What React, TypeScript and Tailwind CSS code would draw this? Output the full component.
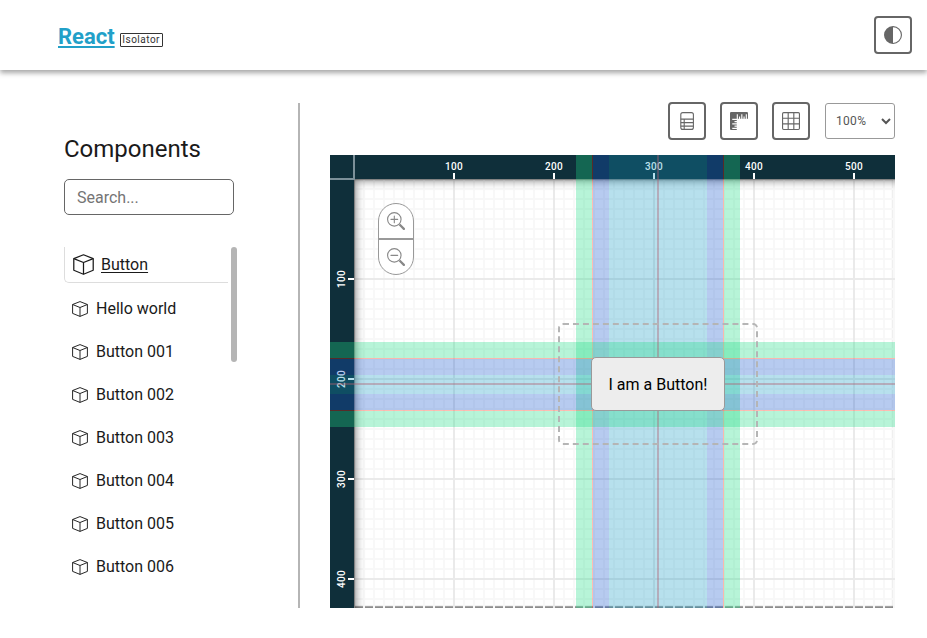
import React from "react";
import { BsCircleHalf, BsGrid3X3, BsRulers, BsZoomIn, BsZoomOut } from "react-icons/bs";

const items = ["Hello world", "Button 001", "Button 002", "Button 003", "Button 004", "Button 005", "Button 006"];

function Cube({ size }: { size: number }) {
  return (
    <svg width={size} height={size} viewBox="0 0 16 16" fill="none" stroke="#1a1a1a" strokeWidth="0.95" strokeLinejoin="round" className="shrink-0">
      <path d="M8 .6 15.4 3.5V12.4L8 15.4.6 12.4V3.5Z" />
      <path d="M.6 3.5 8 6.5 15.4 3.5M8 6.5V15.4" />
    </svg>
  );
}

function SheetIcon() {
  return (
    <svg width="18" height="18" viewBox="0 0 18 18" fill="none" stroke="currentColor" strokeWidth="1.1">
      <rect x="2.8" y=".6" width="12.6" height="16.8" rx="2" />
      <path d="M2.8 7.1H15.4M2.8 10.6H15.4M2.8 14.1H15.4M6.2 7.1V17.4" />
    </svg>
  );
}

function ToolButton({ children }: { children: React.ReactNode }) {
  return (
    <button className="flex size-[38px] items-center justify-center rounded-[4px] border-2 border-[#666] text-[#666]">
      {children}
    </button>
  );
}

function GridLines() {
  return (
    <svg className="absolute inset-0 size-full" shapeRendering="crispEdges">
      <defs>
        <pattern id="minor" width="10" height="10" x="-1" y="-1" patternUnits="userSpaceOnUse">
          <path d="M0 0H10V2H2V10H0Z" fill="#f8f8f8" />
        </pattern>
        <pattern id="major" width="100" height="100" x="-1" y="-1" patternUnits="userSpaceOnUse">
          <path d="M0 0H100V2H2V100H0Z" fill="#eaeaea" />
        </pattern>
      </defs>
      <rect width="100%" height="100%" fill="url(#minor)" />
      <rect width="100%" height="100%" fill="url(#major)" />
    </svg>
  );
}

function Guides() {
  return (
    <div className="absolute inset-0">
      <div className="absolute inset-y-0 left-[246px] flex w-[164px]">
        <div className="w-4 bg-[#20dc85]/32" />
        <div className="w-[17px] border-l border-[#ff2000]/30 bg-[#1858d0]/31 bg-clip-padding" />
        <div className="w-[98px] bg-[#1298c4]/30" />
        <div className="w-[17px] border-r border-[#ff2000]/30 bg-[#1858d0]/31 bg-clip-padding" />
        <div className="w-4 bg-[#20dc85]/32" />
      </div>
      <div className="absolute inset-x-0 top-[187px] flex h-[85px] flex-col">
        <div className="h-4 bg-[#20dc85]/32" />
        <div className="h-[17px] border-t border-[#ff2000]/30 bg-[#1858d0]/31 bg-clip-padding" />
        <div className="h-[19px] bg-[#1298c4]/30" />
        <div className="h-[17px] border-b border-[#ff2000]/30 bg-[#1858d0]/31 bg-clip-padding" />
        <div className="h-4 bg-[#20dc85]/32" />
      </div>
      <div className="absolute inset-y-0 left-[327px] w-0.5 bg-[#b06070]/40" />
      <div className="absolute inset-x-0 top-[228px] h-0.5 bg-[#b06070]/40" />
    </div>
  );
}

function Workspace() {
  return (
    <div className="relative flex h-[453px] w-[565px] flex-col overflow-hidden bg-white">
      <div className="relative z-10 flex h-6 shrink-0 overflow-hidden bg-[#0f2f3a] pl-[74px] text-[10px] font-medium leading-none tracking-[0.3px] text-white">
        {[100, 200, 300, 400, 500].map((n) => (
          <div key={n} className="flex w-[100px] shrink-0 flex-col items-center justify-between pt-[7px]">
            <span>{n}</span>
            <i className="h-1.5 w-0.5 bg-white" />
          </div>
        ))}
      </div>
      <div className="flex min-h-0 flex-1">
        <div className="flex w-6 shrink-0 flex-col overflow-hidden bg-[#0f2f3a] pt-[50px] text-[10px] font-medium leading-none tracking-[0.3px] text-white">
          {[100, 200, 300, 400].map((n) => (
            <div key={n} className="flex h-[100px] shrink-0 items-center justify-between pl-[7px]">
              <span className="rotate-180 [writing-mode:vertical-rl]">{n}</span>
              <i className="h-0.5 w-1.5 bg-white" />
            </div>
          ))}
        </div>
        <div className="relative flex-1 shadow-[inset_-1px_0_3px_rgba(0,0,0,0.45),inset_0_-2px_1px_rgba(0,0,0,0.35)]">
          <GridLines />
          <div className="absolute -bottom-4 -right-4 left-0 top-0 shadow-[inset_3px_3px_8px_-1px_rgba(0,0,0,0.45),inset_1px_1px_1px_rgba(0,0,0,0.25)] [clip-path:inset(0_16px_16px_0)]" />
          <div className="absolute left-6 top-6 flex h-[72px] w-9 flex-col overflow-hidden rounded-[18px] border border-[#999] bg-white text-[#888]">
            <div className="flex flex-1 items-center justify-center border-b border-[#999]"><BsZoomIn size={18} /></div>
            <div className="flex flex-1 items-center justify-center border-t border-[#999]"><BsZoomOut size={18} /></div>
          </div>
        </div>
      </div>
      <div className="absolute left-0 top-0 z-20 size-[25px] border-b-2 border-r-2 border-[#7c9099]" />
      <div className="absolute inset-0 z-20">
        <Guides />
        <div className="absolute left-[228px] top-[168px] flex h-[122px] w-[200px] items-center justify-center rounded-[5px] border-2 border-dashed border-[#b5b5b5]">
          <button className="h-[54px] w-[134px] shrink-0 rounded-[5px] border border-[#999] bg-[#ededed] pt-0.5 text-[16px] text-black">I am a Button!</button>
        </div>
      </div>
    </div>
  );
}

export default function App() {
  return (
    <div className="flex h-[638px] w-[927px] flex-col overflow-hidden bg-white font-[Roboto,sans-serif] text-[#1a1a1a]">
      <header className="flex h-[70px] shrink-0 items-center justify-between pl-[58px] pr-[15px] shadow-[0_3px_5px_rgba(0,0,0,0.35)]">
        <div className="flex items-end gap-[5px] pt-0.5">
          <span className="text-[22px] font-bold leading-[25px] text-[#22a0c8] underline decoration-[#22a0c8] decoration-2 underline-offset-2">React</span>
          <span className="mb-0.5 flex h-[14px] w-[43px] items-center justify-center rounded-[1px] border border-[#333] text-[10px] tracking-[0.5px] text-[#333]">Isolator</span>
        </div>
        <ToolButton><BsCircleHalf size={18} /></ToolButton>
      </header>
      <main className="flex flex-1 pt-[33px]">
        <aside className="flex h-[505px] w-[300px] flex-col border-r-2 border-[#b5b5b5] pl-16 pt-[30px]">
          <h1 className="text-[24px] leading-8">Components</h1>
          <input placeholder="Search..." className="mt-[14px] h-9 w-[170px] rounded-[5px] border border-[#666] px-3 text-[16px] placeholder:text-[#757575]" />
          <div className="mt-8 flex w-[173px] justify-between">
            <ul className="w-[164px]">
              <li className="flex h-9 items-center gap-[7px] rounded-bl-[5px] border-b border-l border-[#ddd] pl-2">
                <Cube size={21} />
                <span className="underline underline-offset-2">Button</span>
              </li>
              <li className="h-1" />
              {items.map((t) => (
                <li key={t} className="flex h-[43px] items-center gap-2 pl-2">
                  <Cube size={16} />
                  <span>{t}</span>
                </li>
              ))}
            </ul>
            <div className="h-[115px] w-1.5 rounded-full bg-[#b5b5b5]" />
          </div>
        </aside>
        <section className="flex w-[595px] flex-col pl-[30px]">
          <div className="-mt-px flex h-[52px] items-start justify-end gap-[14px]">
            <ToolButton><SheetIcon /></ToolButton>
            <ToolButton><BsRulers size={18} /></ToolButton>
            <ToolButton><BsGrid3X3 size={18} /></ToolButton>
            <select className="ml-px mt-px h-9 w-[70px] rounded-[3px] border border-[#999] bg-white pl-1.5 text-[12px] tracking-[0.3px] text-[#555]">
              <option>100%</option>
            </select>
          </div>
          <div className="mt-px"><Workspace /></div>
        </section>
      </main>
    </div>
  );
}
